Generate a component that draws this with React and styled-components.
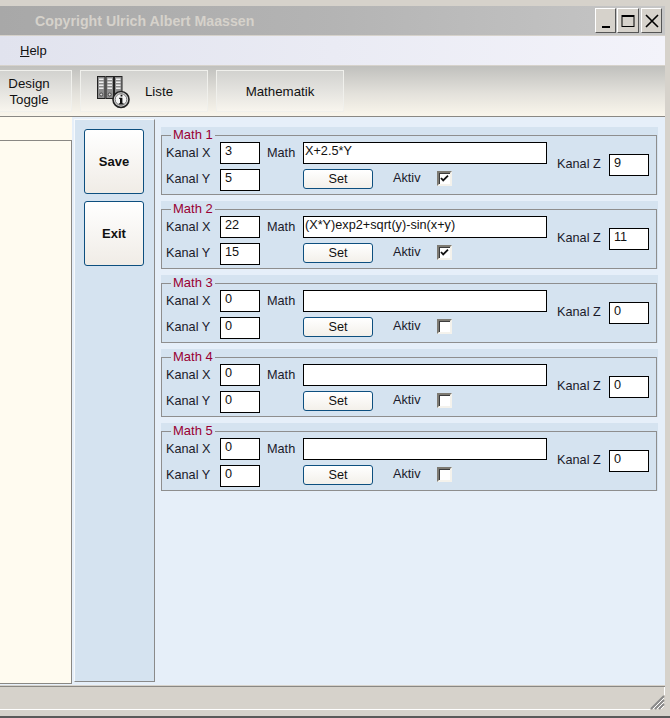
import React from 'react';
import styled, { createGlobalStyle } from 'styled-components';

const Global = createGlobalStyle`
  html, body { margin: 0; padding: 0; background: #d6d2cb; overflow: hidden; }
  body { font-family: "Liberation Sans", Arial, sans-serif; }
`;
const Page = styled.div`
  width: 670px; height: 718px; box-sizing: border-box; overflow: hidden;
  display: flex; flex-direction: column; background: #d6d2cb;
  padding: 6px 5px 0 0; border-bottom: 2px solid #5a5a5a;
`;
const TitleBar = styled.div`
  height: 29px; flex: none; display: flex; align-items: center; justify-content: space-between;
  padding: 0 3px 0 35px; background: linear-gradient(90deg, #a8a8a8 0%, #b4b4b4 50%, #c6c6c6 100%);
`;
const TitleText = styled.span`
  font-size: 14.2px; font-weight: 700; color: #d6d2cb; margin-top: 1px;
`;
const WinButtons = styled.div`display: flex; gap: 1px;`;
const WinButton = styled.button`
  width: ${p => p.$w}px; height: 25px; padding: 0; display: flex; align-items: center; justify-content: center;
  background: #d6d2cb; border: 1px solid; border-color: #fff #555 #555 #fff; margin-left: ${p => p.$gap || 0}px;
  svg { display: block; }
`;
const MenuBar = styled.div`
  height: 29px; flex: none; margin-top: 1px; display: flex; align-items: center; padding-left: 20px;
  background: linear-gradient(90deg, #e1e3ee, #f3f3fa); font-size: 13px; color: #111;
`;
const MenuKey = styled.span`text-decoration: underline;`;
const ToolBar = styled.div`
  height: 51px; flex: none; margin-top: 1px; box-sizing: border-box; padding-top: 4px; display: flex; gap: 8px;
  background: linear-gradient(180deg, #c0c0bd 0%, #e3e1db 55%, #faf6ec 100%);
  border-bottom: 1px solid #8a8884;
`;
const ToolButton = styled.div`
  width: ${p => p.$w}px; height: 42px; box-sizing: border-box; flex: none; margin-left: ${p => p.$ml || 0}px;
  display: flex; align-items: center; justify-content: center; padding-top: 1px;
  border: 1.5px solid #f0f0ec; font-size: 13.3px; color: #111; line-height: 16px; text-align: center;
  background: linear-gradient(180deg, #d2d2cf 0%, #e4e3df 50%, #f8f5ee 100%);
`;
const ToolLabel = styled.span`margin: 0 18px 0 14px;`;
const Main = styled.div`flex: none; height: 568px; display: flex; background: #e6eff9;`;
const LeftPane = styled.div`
  width: 72px; flex: none; box-sizing: border-box; height: 567px; background: #fffbf0; padding-top: 23px;
`;
const LeftInner = styled.div`
  height: 100%; box-sizing: border-box; border: 1px solid #8a8884; border-left: none; background: #fffbf0;
`;
const SidePanel = styled.div`
  width: 81px; flex: none; margin: 2px 0 0 2px; height: 563px; box-sizing: border-box;
  display: flex; flex-direction: column; gap: 7px; padding: 9px 0 0 9px; background: #d5e3f0;
  border: 1px solid; border-color: #f6f9fc #8a8a8a #8a8a8a #f6f9fc;
`;
const ActionButton = styled.button`
  width: 60px; height: 65px; padding: 0; border: 1px solid #0d4f7f; border-radius: 3px;
  background: linear-gradient(180deg, #fff 0%, #f0ece6 100%);
  font: 700 13px "Liberation Sans", Arial, sans-serif; color: #111;
`;
const Groups = styled.div`
  width: 497px; flex: none; margin: 10px 0 0 6px; display: flex; flex-direction: column; gap: 6px;
`;
const GroupPanel = styled.div`height: 68px; box-sizing: border-box; padding-top: 1px; background: #d5e3f0;`;
const Group = styled.fieldset`
  margin: 0 1px 0 0; padding: 0 0 3px 4px; height: 67px; box-sizing: border-box; min-width: 0;
  border: 1px solid #8e8e8e;
`;
const GroupGrid = styled.div`
  display: grid; grid-template-columns: 54px 40px 7px 36px 244px 10px 52px 40px;
  grid-template-rows: 22px 22px; row-gap: 5px; align-items: center;
`;
const GroupTitle = styled.legend`
  margin-left: 5px; padding: 0 2px; font-size: 13px; line-height: 14px; color: #990033;
`;
const Label = styled.span`
  font-size: 12.7px; color: #1a1a2a; white-space: nowrap; margin-bottom: ${p => p.$mb || 0}px;
  grid-column: ${p => p.$col || 'auto'}; grid-row: ${p => p.$row || 'auto'};
`;
const Field = styled.div`
  width: ${p => p.$w || 40}px; height: 22px; box-sizing: border-box; background: #fff; border: 1px solid #000;
  padding: 0 3px 0 ${p => p.$pl || 4}px; font-size: 12.7px; line-height: 17px; color: #111; white-space: nowrap; overflow: hidden;
  grid-column: ${p => p.$col}; grid-row: ${p => p.$row}; margin-bottom: ${p => p.$mb || 0}px;
`;
const ControlRow = styled.div`grid-column: 5; grid-row: 2; display: flex; align-items: center;`;
const SetButton = styled.button`
  width: 70px; height: 20px; padding: 0; margin: 0 20px 2px 0; border: 1px solid #0d4f7f; border-radius: 3px;
  background: linear-gradient(180deg, #fff, #f3f0ea);
  font: 12.7px "Liberation Sans", Arial, sans-serif; color: #111;
`;
const Check = styled.span`
  width: 15px; height: 15px; margin: 0 0 4px 15px; box-sizing: border-box; background: #fff; display: block;
  border: 2px solid; border-color: #7d7a72 #f4f2ec #f4f2ec #7d7a72; box-shadow: inset 1px 1px 0 #3c3c3c;
  svg { display: block; }
`;
const AktivLabel = styled(Label)`width: 29px;`;
const StatusBar = styled.div`
  flex: 1; min-height: 0; margin-top: 1px; border-top: 1px solid #8a8884; display: flex; flex-direction: column;
`;
const StatusBody = styled.div`
  height: 23px; flex: none; box-sizing: border-box; border-bottom: 1px solid #fff; border-right: 1px solid #fff;
  position: relative;
`;
const Grip = styled.svg`
  position: absolute; right: -1px; bottom: -1px; background: #d6d2cb; display: block;
`;

const ListIcon = () => (
  <svg width="34" height="34" viewBox="0 0 34 34">
    {[0, 8.5, 17].map(x => (
      <g key={x} transform={`translate(${x} 0)`}>
        <rect x="0.5" y="1.5" width="7.5" height="22" fill="#8e8e8e" stroke="#222" />
        <rect x="2" y="3.5" width="4.5" height="1.5" fill="#eee" />
        <rect x="2" y="6.5" width="4.5" height="1.5" fill="#eee" />
        <rect x="2" y="9.5" width="4.5" height="1.5" fill="#eee" />
        <rect x="2" y="12.5" width="4.5" height="1.5" fill="#eee" />
        <circle cx="4.2" cy="19.5" r="1.5" fill="#ddd" stroke="#222" strokeWidth="0.7" />
      </g>
    ))}
    <circle cx="24" cy="24.5" r="8" fill="#d8d8d8" stroke="#222" strokeWidth="1.6" />
    <circle cx="24" cy="24.5" r="5.8" fill="#f4f4f4" stroke="#777" strokeWidth="1" />
    <path d="M23.6 19.7h1.8v1.8h-1.8zM22.2 22.7h3.2v5.6h1.2v1.2h-4.8v-1.2h1.2v-4.4h-0.8z" fill="#111" />
  </svg>
);

const Checkmark = () => (
  <svg width="11" height="11" viewBox="0 0 11 11">
    <path d="M2 5l2.2 2.4L9 2.6" fill="none" stroke="#111" strokeWidth="1.8" />
  </svg>
);

const groups = [
  { n: 1, x: '3', y: '5', z: '9', math: 'X+2.5*Y', on: true, pl: 1 },
  { n: 2, x: '22', y: '15', z: '11', math: '(X*Y)exp2+sqrt(y)-sin(x+y)', on: true, pl: 1 },
  { n: 3, x: '0', y: '0', z: '0', math: '' },
  { n: 4, x: '0', y: '0', z: '0', math: '' },
  { n: 5, x: '0', y: '0', z: '0', math: '' },
];

export default function App() {
  return (
    <>
      <Global />
      <Page>
        <TitleBar>
          <TitleText>Copyright Ulrich Albert Maassen</TitleText>
          <WinButtons>
            <WinButton $w={21} aria-label="Minimize">
              <svg width="12" height="16" viewBox="0 0 12 16"><rect x="2" y="13" width="8" height="2" fill="#000" /></svg>
            </WinButton>
            <WinButton $w={22} aria-label="Maximize">
              <svg width="14" height="14" viewBox="0 0 14 14"><rect x="1" y="1.5" width="12" height="11" fill="none" stroke="#000" /><rect x="1" y="1" width="12" height="2" fill="#000" /></svg>
            </WinButton>
            <WinButton $w={21} aria-label="Close" $gap={1}>
              <svg width="14" height="14" viewBox="0 0 14 14"><path d="M1 1l12 12M13 1L1 13" stroke="#000" strokeWidth="1.6" /></svg>
            </WinButton>
          </WinButtons>
        </TitleBar>
        <MenuBar><span><MenuKey>H</MenuKey>elp</span></MenuBar>
        <ToolBar>
          <ToolButton $w={86} $ml={-14}>Design<br />Toggle</ToolButton>
          <ToolButton $w={128}><ListIcon /><ToolLabel>Liste</ToolLabel></ToolButton>
          <ToolButton $w={128}>Mathematik</ToolButton>
        </ToolBar>
        <Main>
          <LeftPane><LeftInner /></LeftPane>
          <SidePanel>
            <ActionButton>Save</ActionButton>
            <ActionButton>Exit</ActionButton>
          </SidePanel>
          <Groups>
            {groups.map(g => (
              <GroupPanel key={g.n}>
                <Group>
                  <GroupTitle>Math {g.n}</GroupTitle>
                  <GroupGrid>
                    <Label $col={1} $row={1}>Kanal X</Label>
                    <Field $col={2} $row={1}>{g.x}</Field>
                    <Label $col={4} $row={1}>Math</Label>
                    <Field $col={5} $row={1} $w={244} $pl={g.pl || 2}>{g.math}</Field>
                    <Label $col={7} $row="1 / 3" $mb={5}>Kanal Z</Label>
                    <Field $col={8} $row="1 / 3" $mb={3}>{g.z}</Field>
                    <Label $col={1} $row={2} $mb={2}>Kanal Y</Label>
                    <Field $col={2} $row={2}>{g.y}</Field>
                    <ControlRow>
                      <SetButton>Set</SetButton>
                      <AktivLabel $mb={4}>Aktiv</AktivLabel>
                      <Check>{g.on && <Checkmark />}</Check>
                    </ControlRow>
                  </GroupGrid>
                </Group>
              </GroupPanel>
            ))}
          </Groups>
        </Main>
        <StatusBar>
          <StatusBody>
            <Grip width="15" height="15" viewBox="0 0 15 15">
              <path d="M14 1L1 14M14 5L5 14M14 9L9 14" stroke="#8a8a8a" strokeWidth="2" />
              <path d="M14 3L3 14M14 7L7 14M14 11L11 14" stroke="#fff" strokeWidth="1" />
            </Grip>
          </StatusBody>
        </StatusBar>
      </Page>
    </>
  );
}
